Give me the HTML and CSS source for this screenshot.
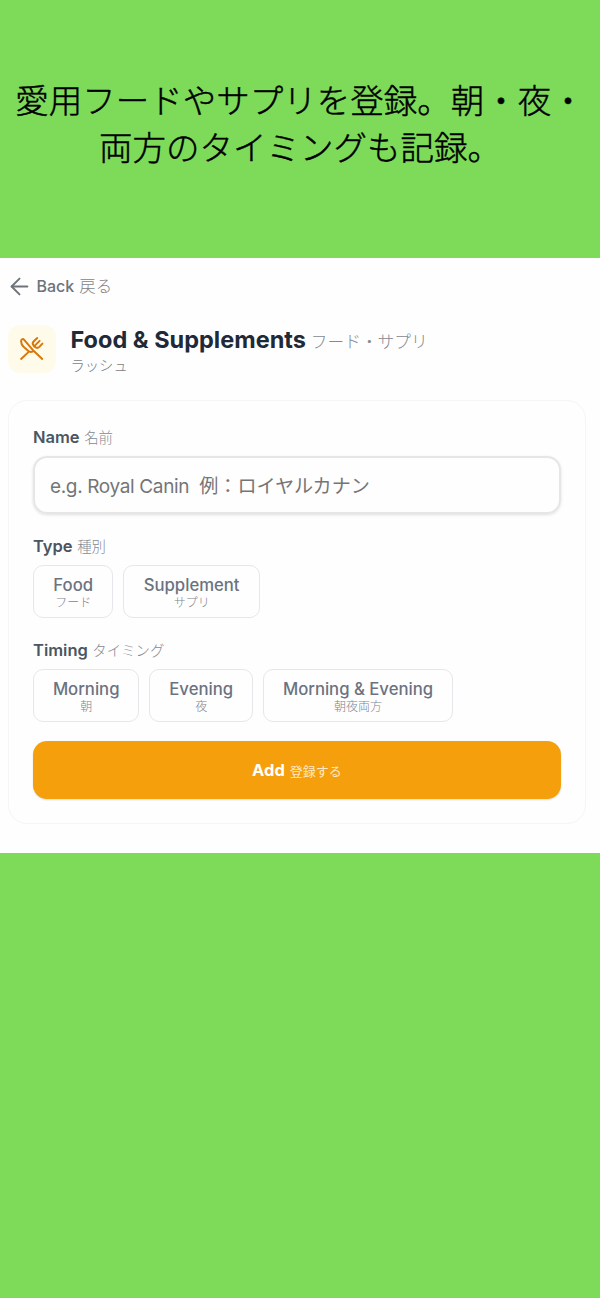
FILE: index.html
```html
<!DOCTYPE html>
<html lang="ja">
<head>
<meta charset="utf-8">
<title>Food &amp; Supplements</title>
<link rel="stylesheet" href="styles.css">
</head>
<body>
<header class="hero"><h1 class="hero-title">愛用フードやサプリを登録。朝・夜・<br>両方のタイミングも記録。</h1></header>
<main class="screen">
  <a class="back">
    <svg class="back-icon" viewBox="0 0 24 24" fill="none" stroke="currentColor" stroke-width="1.7" stroke-linecap="round" stroke-linejoin="round"><path d="m12 19-7-7 7-7"/><path d="M19 12H5"/></svg>
    <span class="back-text">Back</span><span class="back-ja">戻る</span>
  </a>
  <div class="title-row">
    <div class="badge">
      <svg class="badge-icon" viewBox="0 0 24 24" fill="none" stroke="currentColor" stroke-width="1.9" stroke-linecap="round" stroke-linejoin="round"><path d="m17.5 2-3.3 3a3 3 0 0 0-.1 4.2l1.2 1.2a3 3 0 0 0 4.2 0L22.5 7.3"/><path d="M14 14.2 5 3.7C3.6 2.3 2 3.2 2 5c0 2.100 1 3.900 2.400 5.300l4.600 4.200c1.300 1.200 3.600 1 5-.3Zm0 0 8.300 7.800"/><path d="m2 22 6.800-6.300"/><path d="m19.800 4.700-5.400 5.300"/></svg>
    </div>
    <div class="titles">
      <h2 class="title"><span class="title-en">Food &amp; Supplements</span><span class="title-ja">フード・サプリ</span></h2>
      <div class="pet">ラッシュ</div>
    </div>
  </div>
  <form class="card">
    <div class="label"><span class="label-en">Name</span><span class="label-ja">名前</span></div>
    <div class="input"><span class="ph-en">e.g. Royal Canin</span><span class="ph-ja">例：ロイヤルカナン</span></div>
    <div class="label label-type"><span class="label-en">Type</span><span class="label-ja">種別</span></div>
    <div class="options">
      <div class="option w-food"><span class="option-en">Food</span><span class="option-ja">フード</span></div>
      <div class="option w-supplement"><span class="option-en">Supplement</span><span class="option-ja">サプリ</span></div>
    </div>
    <div class="label label-timing"><span class="label-en">Timing</span><span class="label-ja">タイミング</span></div>
    <div class="options">
      <div class="option w-morning"><span class="option-en">Morning</span><span class="option-ja">朝</span></div>
      <div class="option w-evening"><span class="option-en">Evening</span><span class="option-ja">夜</span></div>
      <div class="option w-both"><span class="option-en">Morning &amp; Evening</span><span class="option-ja">朝夜両方</span></div>
    </div>
    <div class="submit"><span class="submit-en">Add</span><span class="submit-ja">登録する</span></div>
  </form>
</main>
</body>
</html>
```
FILE: styles.css
```css
* { box-sizing: border-box; }
body {
  margin: 0;
  min-height: 1298px;
  background: #7eda59;
  font-family: Inter, "Noto Sans CJK JP", sans-serif;
  white-space: nowrap;
}
.hero { height: 258px; padding-top: 75px; }
.hero-title {
  margin: 0 -10px;
  font: 300 33.5px/47px "Noto Sans CJK JP", sans-serif;
  -webkit-text-stroke: 0.45px #000;
  text-align: center;
  color: #000;
}
.screen {
  height: 595px;
  padding: 17px 14px 0 6px;
  background: #fefefe;
}
.back {
  display: flex;
  align-items: center;
  height: 22px;
  color: #6e737b;
  font-size: 16px;
}
.back-icon { width: 27px; height: 27px; margin-right: 3.5px; }
.back-text { font-weight: 500; }
.back-ja { margin-left: 5px; font-size: 16.4px; font-weight: 300; color: #7f838a; line-height: 20px; padding-bottom: 1px; }
.title-row { display: flex; margin: 28px 0 0 2px; height: 48px; }
.badge {
  display: flex;
  align-items: center;
  justify-content: center;
  width: 48px;
  height: 48px;
  margin-right: 14.5px;
  padding: 0 2px 1px 0;
  border-radius: 12px;
  background: #fffbeb;
  color: #d97706;
}
.badge-icon { width: 25px; height: 25px; }
.title { display: flex; align-items: baseline; margin: 0; line-height: 30px; }
.title-en { font-size: 23.5px; font-weight: 700; color: #1f2937; }
.title-ja { margin-left: 5px; font-size: 16.7px; font-weight: 300; color: #858a92; }
.pet { font-size: 14.3px; line-height: 18px; font-weight: 300; color: #7a7f87; }
.card {
  height: 424px;
  margin: 27px 0 0 2px;
  padding: 24px;
  border: 1px solid #f5f5f6;
  border-radius: 19px;
}
.label { display: flex; align-items: baseline; height: 24px; line-height: 24px; }
.label-en { font-size: 16.5px; font-weight: 600; color: #4b5563; }
.label-ja { margin-left: 4.5px; font-size: 14.4px; font-weight: 300; color: #858a92; }
.input {
  display: flex;
  align-items: center;
  height: 58px;
  margin-top: 7px;
  padding-left: 15px;
  border: 2px solid #e5e6e8;
  border-radius: 14px;
  box-shadow: 0 1px 3px rgba(0, 0, 0, .12);
  color: #757575;
  font-size: 19px;
}
.ph-en { letter-spacing: -0.35px; padding-top: 2px; }
.ph-ja { margin-left: 10px; padding-bottom: 1px; font-size: 19.1px; }
.label-type { margin-top: 20px; }
.label-timing { margin-top: 20px; }
.options { display: flex; gap: 10px; margin-top: 7px; }
.option {
  display: flex;
  flex-direction: column;
  align-items: center;
  height: 53px;
  padding-top: 9px;
  border: 1px solid #e5e7eb;
  border-radius: 10px;
}
.option-en { font-size: 16.7px; line-height: 20px; font-weight: 500; color: #6b7280; }
.option-ja { font-size: 12px; line-height: 15px; font-weight: 300; color: #7e838d; }
.w-food { width: 80.4px; }
.w-supplement { width: 136.5px; }
.w-morning { width: 106.4px; }
.w-evening { width: 103.6px; }
.w-both { width: 190px; }
.submit {
  display: flex;
  align-items: baseline;
  justify-content: center;
  height: 58px;
  margin-top: 19px;
  border-radius: 14px;
  background: #f59f0d;
  box-shadow: 0 1px 2px rgba(0, 0, 0, .12);
  line-height: 58px;
  color: #fff;
}
.submit-en { font-size: 16.5px; font-weight: 700; }
.submit-ja { margin-left: 5px; font-size: 13px; line-height: 56px; font-weight: 400; color: #ffe9c4; }
```
